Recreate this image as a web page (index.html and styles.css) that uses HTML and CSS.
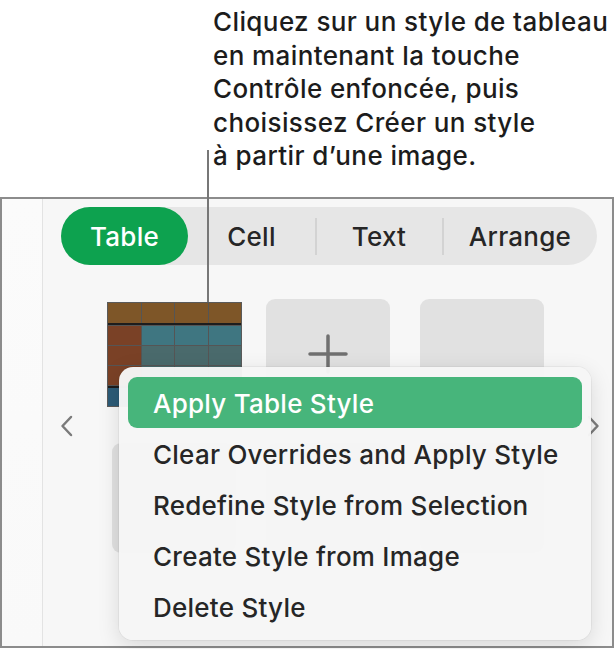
FILE: index.html
```html
<!DOCTYPE html>
<html lang="fr">
<head>
<meta charset="utf-8">
<title>Table styles</title>
<link rel="stylesheet" href="styles.css">
</head>
<body>
<div class="page">
  <div class="callout">
    <p class="callout-text">Cliquez sur un style de tableau<br>en maintenant la touche<br>Contrôle enfoncée, puis<br>choisissez Créer un style<br>à partir d’une image.</p>
  </div>
  <div class="panel">
    <div class="sidebar"></div>
    <div class="content">
      <div class="tabs">
        <div class="tab tab-table active">Table</div>
        <div class="tab tab-cell">Cell</div>
        <div class="sep"></div>
        <div class="tab tab-text">Text</div>
        <div class="sep"></div>
        <div class="tab tab-arrange">Arrange</div>
      </div>
      <div class="styles">
        <svg class="nav nav-left" viewBox="0 0 13 22" width="13" height="22"><path d="M11 2 L2.5 11 L11 20" fill="none" stroke="#7b7b7b" stroke-width="2.5" stroke-linecap="round" stroke-linejoin="round"/></svg>
        <div class="grid">
          <div class="tile tile-table">
            <div class="thumb">
              <div class="trow th"><i></i><i></i><i></i><i></i></div>
              <div class="trow tb"><i></i><i></i><i></i><i></i></div>
              <div class="trow tb alt"><i></i><i></i><i></i><i></i></div>
              <div class="trow tb alt"><i></i><i></i><i></i><i></i></div>
              <div class="trow tf"><i></i><i></i><i></i><i></i></div>
            </div>
          </div>
          <div class="tile tile-add">
            <svg viewBox="0 0 40 40" width="40" height="40"><path d="M20 2 V38 M2 20 H38" fill="none" stroke="#707070" stroke-width="3.5" stroke-linecap="round"/></svg>
          </div>
          <div class="tile"></div>
          <div class="tile"></div>
          <div class="tile"></div>
          <div class="tile"></div>
        </div>
        <svg class="nav nav-right" viewBox="0 0 13 22" width="13" height="22"><path d="M2 2 L10.5 11 L2 20" fill="none" stroke="#7b7b7b" stroke-width="2.5" stroke-linecap="round" stroke-linejoin="round"/></svg>
      </div>
    </div>
  </div>
  <div class="leader"></div>
  <div class="menu">
    <div class="menu-item active">Apply Table Style</div>
    <div class="menu-item">Clear Overrides and Apply Style</div>
    <div class="menu-item">Redefine Style from Selection</div>
    <div class="menu-item">Create Style from Image</div>
    <div class="menu-item">Delete Style</div>
  </div>
</div>
</body>
</html>
```
FILE: styles.css
```css
* { box-sizing: border-box; }
html, body { margin: 0; background: #ffffff; }
body { font-family: Inter, "Liberation Sans", sans-serif; color: #1f1f1f; }

.page { position: relative; width: 614px; height: 649px; overflow: hidden; }

.callout { height: 197px; padding: 5px 0 0 213px; }
.callout-text {
  margin: 0;
  font-size: 26px;
  font-weight: 450;
  line-height: 33.5px;
  letter-spacing: 0.4px;
  color: #1c1c1c;
  white-space: nowrap;
}

.panel {
  display: flex;
  height: 451px;
  border: 2px solid #8c8c8c;
  background: #f7f7f7;
}
.sidebar {
  width: 41px;
  flex: none;
  background: linear-gradient(180deg, #fbfbfb, #f9f9f9);
  border-right: 1px solid #e3e3e3;
}
.content { flex: 1; padding-top: 8px; }

.tabs {
  display: flex;
  align-items: center;
  width: 536px;
  height: 58px;
  margin-left: 18px;
  background: #e6e6e6;
  border-radius: 29px;
}
.tab {
  height: 58px;
  display: flex;
  align-items: center;
  justify-content: center;
  font-size: 26px;
  font-weight: 450;
  letter-spacing: 0.25px;
  color: #262626;
  flex: none;
}
.tab-table { width: 127px; }
.tab-cell { width: 127px; }
.tab-text { width: 126px; }
.tab-arrange { flex: 1; }
.tab.active { background: #0da24f; color: #ffffff; border-radius: 29px; }
.sep { width: 2px; height: 37px; background: #d3d3d3; flex: none; margin: 0 -0.5px; }

.styles { display: flex; align-items: center; margin-top: 34px; }
.nav { flex: none; display: block; }
.nav-left { margin-left: 17px; margin-right: 39px; }
.nav-right { margin-left: 43px; }

.grid {
  display: grid;
  grid-template-columns: repeat(3, 124px);
  grid-auto-rows: 110px;
  gap: 34px 30px;
}
.tile { background: #e1e1e1; border-radius: 9px; }
.tile-table { background: none; }
.tile-add { display: flex; align-items: center; justify-content: center; }

.thumb {
  width: 135px;
  height: 105px;
  margin: 3px 0 0 -5px;
  border: 1px solid #5a5a5a;
  background: #555555;
  display: flex;
  flex-direction: column;
  gap: 1px;
}
.trow { display: grid; grid-template-columns: repeat(4, 1fr); gap: 1px; flex: 1; }
.trow i { display: block; }
.th { flex: none; height: 22px; border-bottom: 2px solid #1d1d1d; }
.th i { background: #7e5628; }
.tb i { background: #3f7681; }
.tb.alt i { background: #4a6a6c; }
.tb i:first-child { background: #7a4126; }
.tf { flex: none; height: 20px; border-top: 2px solid #1d1d1d; }
.tf i { background: #2c5b77; }

.leader {
  position: absolute;
  left: 207px;
  top: 150px;
  width: 2px;
  height: 152px;
  background: #777777;
}

.menu {
  position: absolute;
  left: 119px;
  top: 367px;
  width: 472px;
  height: 273px;
  padding: 10px 9px 9px;
  background: rgba(246, 246, 246, 0.97);
  border-radius: 14px;
  box-shadow: 0 0 0 1px rgba(0, 0, 0, 0.04), 0 6px 22px rgba(0, 0, 0, 0.13);
  display: flex;
  flex-direction: column;
}
.menu-item {
  flex: 1;
  display: flex;
  align-items: center;
  padding: 3px 0 0 25px;
  font-size: 26px;
  font-weight: 450;
  letter-spacing: 0.25px;
  color: #262626;
  border-radius: 9px;
  white-space: nowrap;
}
.menu-item.active { background: #47b57b; color: #ffffff; }
```
